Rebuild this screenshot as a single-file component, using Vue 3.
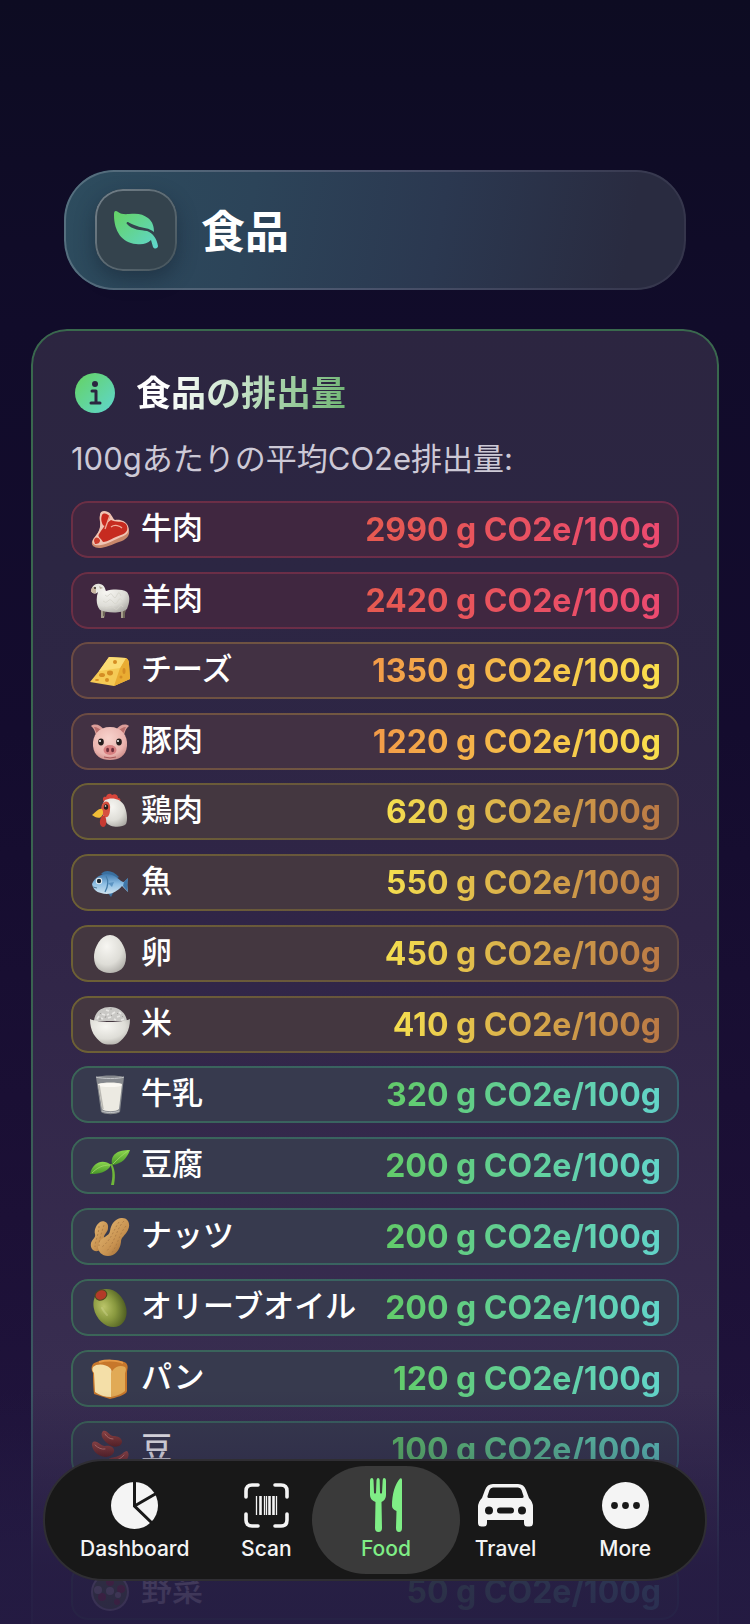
<script setup>
import { ref } from 'vue'

const groups = [
  {
    level: 'severe',
    items: [
      { icon: 'steak', name: '牛肉', grams: 2990 },
      { icon: 'sheep', name: '羊肉', grams: 2420 }
    ]
  },
  {
    level: 'high',
    items: [
      { icon: 'cheese', name: 'チーズ', grams: 1350 },
      { icon: 'pig', name: '豚肉', grams: 1220 }
    ]
  },
  {
    level: 'medium',
    items: [
      { icon: 'chicken', name: '鶏肉', grams: 620 },
      { icon: 'fish', name: '魚', grams: 550 },
      { icon: 'egg', name: '卵', grams: 450 },
      { icon: 'rice', name: '米', grams: 410 }
    ]
  },
  {
    level: 'low',
    items: [
      { icon: 'milk', name: '牛乳', grams: 320 },
      { icon: 'sprout', name: '豆腐', grams: 200 },
      { icon: 'peanut', name: 'ナッツ', grams: 200 },
      { icon: 'olive', name: 'オリーブオイル', grams: 200 },
      { icon: 'bread', name: 'パン', grams: 120 },
      { icon: 'beans', name: '豆', grams: 100 },
      { empty: true },
      { icon: 'salad', name: '野菜', grams: 50 }
    ]
  }
]

const tabs = ['Dashboard', 'Scan', 'Food', 'Travel', 'More']
const active = ref('Food')
</script>

<template>
  <div class="screen">
    <!-- food pictograms, 40x40 -->
    <svg class="sprites" aria-hidden="true">
      <defs>
        <linearGradient id="g-eco" x1="0" y1="0" x2="1" y2="1">
          <stop offset="0.1" stop-color="#64d36c" /><stop offset="1" stop-color="#5fd6cf" />
        </linearGradient>
        <radialGradient id="g-white" cx="0.4" cy="0.3" r="0.8">
          <stop offset="0" stop-color="#f7f6f2" /><stop offset="0.6" stop-color="#deddd7" /><stop offset="1" stop-color="#a9a7a2" />
        </radialGradient>
        <radialGradient id="g-pink" cx="0.45" cy="0.35" r="0.7">
          <stop offset="0" stop-color="#f8d3cd" /><stop offset="0.7" stop-color="#eab4af" /><stop offset="1" stop-color="#c98885" />
        </radialGradient>
        <linearGradient id="g-blue" x1="0" y1="0" x2="0" y2="1">
          <stop offset="0" stop-color="#3f78ad" /><stop offset="0.5" stop-color="#8ebfe4" /><stop offset="1" stop-color="#d0e3ef" />
        </linearGradient>
        <radialGradient id="g-olive" cx="0.35" cy="0.4" r="0.7">
          <stop offset="0" stop-color="#bac468" /><stop offset="0.5" stop-color="#89993f" /><stop offset="1" stop-color="#4c5b20" />
        </radialGradient>
        <linearGradient id="g-nut" x1="0" y1="0" x2="1" y2="1">
          <stop offset="0" stop-color="#e8bd78" /><stop offset="0.6" stop-color="#c89250" /><stop offset="1" stop-color="#8c5a2a" />
        </linearGradient>
        <linearGradient id="g-leaf" x1="0" y1="0" x2="0" y2="1">
          <stop offset="0" stop-color="#8bd74c" /><stop offset="1" stop-color="#47942a" />
        </linearGradient>
        <linearGradient id="g-bean" x1="0" y1="0" x2="0" y2="1">
          <stop offset="0" stop-color="#a04a43" /><stop offset="1" stop-color="#62221f" />
        </linearGradient>
      </defs>

      <symbol id="steak" viewBox="0 0 40 40">
        <path d="M10 6C10 2 14 1 18 3C22 5 22 9 25 11C30 10 36 12 38 17C41 24 38 28 32 31C25 33 18 37 11 38C5 38 1 36 2 32C3 27 9 24 10 18C11 13 9 10 10 6Z" fill="#c9876a" />
        <path d="M10 5C10 1 14 0 18 2C22 4 22 8 25 10C30 9 36 11 38 16C40 22 37 25 31 27C24 30 18 34 11 35C5 36 1 34 3 30C5 26 9 23 10 17C11 12 9 9 10 5Z" fill="#f0c4b4" />
        <path d="M12 5C14 2 18 4 20 7L17 13C17 17 13 17 12 13C11 10 11 8 12 5Z" fill="#c9291f" />
        <path d="M21 10C26 13 31 10 36 14C39 19 37 23 31 25C24 27 18 32 13 32C11 28 7 27 9 24C12 20 14 15 21 10Z" fill="#c62b20" />
        <path d="M4 31C4 27 8 26 10 30C10 33 8 34 5 34Z" fill="#cc3b2c" />
        <path d="M20 5L15 19M21 17C25 14 30 16 32 18" fill="none" stroke="#f0ad9b" stroke-width="1.3" />
      </symbol>

      <symbol id="sheep" viewBox="0 0 40 40">
        <path d="M11 27V37H14L16 28M31 27V37H34L36 27" fill="#a59c8b" />
        <path d="M14 28V35M34 28V37" stroke="#6d6558" stroke-width="2" />
        <path d="M8 11C5 14 2 12 1 10C2 5 5 2 10 3C15 4 15 8 16 10C23 8 32 8 37 11C41 16 39 23 37 28C32 33 16 32 10 29C6 24 6 17 8 11Z" fill="url(#g-white)" />
        <path d="M1 10C1 7 3 5 6 6L6 12C4 13 2 12 1 10Z" fill="#c8b5a0" />
        <circle cx="5" cy="7" r="1" fill="#332e2a" />
        <path d="M9 5L13 7L10 8Z" fill="#b8ab9c" />
        <path d="M15 14q2 3 4 0t4 1t4-1t4 1M13 20q3 3 5 0t5 1t5-1t5 1M14 26q3 2 5 0t5 1t5-1t4 0" fill="none" stroke="#d6d4cc" stroke-width="0.8" />
      </symbol>

      <symbol id="cheese" viewBox="0 0 40 40">
        <path d="M19 6L36 7C38 8 39 10 39 13L40 28L24 35L0 31L9 20Z" fill="#f5ca55" />
        <path d="M36 7C38 8 39 10 39 13L40 28L24 35L30 17Z" fill="#e9ac32" />
        <path d="M19 6L36 7L30 17L9 20Z" fill="#fbdc75" />
        <g fill="#d58d24">
          <ellipse cx="12" cy="24" rx="3" ry="2" /><ellipse cx="20" cy="22" rx="3" ry="2.4" /><circle cx="17" cy="29" r="2" />
          <ellipse cx="7" cy="29" rx="2" ry="1" /><ellipse cx="34" cy="20" rx="1.5" ry="3" /><circle cx="25" cy="11" r="2" /><circle cx="31" cy="26" r="1.5" />
        </g>
      </symbol>

      <symbol id="pig" viewBox="0 0 40 40">
        <path d="M1 4C5 1 11 3 14 8L7 16C5 11 5 7 1 4ZM39 4C35 1 29 3 26 8L33 16C35 11 35 7 39 4Z" fill="#dc9e99" />
        <path d="M4 5C7 5 10 7 12 9L8 14ZM36 5C33 5 30 7 28 9L32 14Z" fill="#b96e6c" />
        <path d="M20 5C31 5 38 13 37 24C36 34 29 38 20 38C11 38 4 34 3 24C2 13 9 5 20 5Z" fill="url(#g-pink)" />
        <ellipse cx="11" cy="20" rx="2.8" ry="3.4" fill="#241d1d" /><ellipse cx="29" cy="20" rx="2.8" ry="3.4" fill="#241d1d" />
        <circle cx="10" cy="19" r="1" fill="#fff" /><circle cx="28" cy="19" r="1" fill="#fff" />
        <ellipse cx="20" cy="28" rx="6.500" ry="5" fill="#d77f80" />
        <ellipse cx="17.600" cy="28" rx="1.500" ry="2.300" fill="#702f3b" /><ellipse cx="22.600" cy="28" rx="1.500" ry="2.300" fill="#702f3b" />
        <path d="M14 35Q20 37 26 35" fill="none" stroke="#a95658" />
      </symbol>

      <symbol id="chicken" viewBox="0 0 40 40">
        <path d="M14 10C12 7 13 4 16 5C17 1 21 1 22 3C25 1 28 3 28 6C31 6 31 9 29 11Z" fill="#d6453b" />
        <path d="M15 8C21 5 30 6 34 13C37 19 38 28 36 32C32 36 20 36 16 30C12 25 10 14 15 8Z" fill="url(#g-white)" />
        <path d="M13 11C17 7 21 11 20 17C20 23 18 26 15 25C11 23 10 15 13 11Z" fill="#d7503f" />
        <path d="M12 24C9 28 9 34 13 35C17 35 17 28 15 24Z" fill="#c73a32" />
        <path d="M2 23C6 20 9 16 12 17C14 20 13 23 11 25C8 27 5 25 2 23Z" fill="#f1bd37" />
        <ellipse cx="16" cy="15" rx="2.2" ry="2.8" fill="#281f1c" /><circle cx="15.5" cy="14" r="0.8" fill="#fff" />
      </symbol>

      <symbol id="fish" viewBox="0 0 40 40">
        <path d="M11 11C15 6 23 7 29 14L24 17ZM17 29L21 34L24 28Z" fill="#3a6f9f" />
        <path d="M2 21C6 11 18 8 26 14C30 17 32 19 34 19L38 15C37 20 37 24 38 29L32 23C27 29 19 33 11 30C6 29 3 26 2 21Z" fill="url(#g-blue)" />
        <path d="M34 19L38 15C37 20 37 24 38 29L33 23Z" fill="#3e76a8" />
        <path d="M16 13Q20 20 15 29" fill="none" stroke="#457ca8" stroke-width="1.2" />
        <circle cx="9" cy="18" r="3.2" fill="#e9eff2" /><circle cx="9" cy="18" r="2.2" fill="#182733" />
        <path d="M18 20L24 19L22 24Z" fill="#5d95c3" />
        <path d="M3 24L7 25" stroke="#4d7894" />
      </symbol>

      <symbol id="egg" viewBox="0 0 40 40">
        <path d="M20 1C29 1 36 13 36 23C36 34 29 39 20 39C11 39 4 34 4 23C4 13 11 1 20 1Z" fill="url(#g-white)" />
      </symbol>

      <symbol id="rice" viewBox="0 0 40 40">
        <path d="M4 16C5 6 12 2 20 2C29 2 36 8 37 16Z" fill="#c9c8c5" />
        <path d="M7 14L9 11M12 9L15 10M16 5L19 6M22 9L25 7M27 12L30 11M18 13L21 12M13 14L11 13M31 15L34 14M24 14L26 15M29 7L31 9M19 9L17 10" stroke="#e8e7e4" stroke-width="1.6" />
        <path d="M9 14L11 14M15 13L16 11M20 4L22 4M22 11L21 10M27 9L28 8M32 12L33 11M10 9L11 8" stroke="#a3a19e" />
        <path d="M0 14C8 18 32 18 40 14C40 26 35 33 28 38C24 40 16 40 12 38C5 33 0 26 0 14Z" fill="url(#g-white)" />
      </symbol>

      <symbol id="milk" viewBox="0 0 40 40">
        <path d="M6 2C12 0 29 0 34 2L30 37C26 40 15 40 11 37Z" fill="#85888d" />
        <path d="M8 9C13 7 28 7 32 9L29 34C26 37 15 37 12 34Z" fill="#eceae2" />
        <ellipse cx="20" cy="10" rx="12" ry="2" fill="#faf8f2" />
        <path d="M6 2C12 4 29 4 34 2M12 36C16 38 25 38 29 36" fill="none" stroke="#c5c7ca" />
        <path d="M9 10L13 34" stroke="#b9b8b2" stroke-width="1.5" />
      </symbol>

      <symbol id="sprout" viewBox="0 0 40 40">
        <path d="M22 18C26 25 25 33 24 39L21 39C23 31 23 24 20 18Z" fill="#6fb73a" />
        <path d="M22 19C20 8 28 4 40 4C37 12 32 18 22 19Z" fill="url(#g-leaf)" />
        <path d="M21 19C14 13 3 15 0 28C8 28 17 27 21 19Z" fill="url(#g-leaf)" />
        <path d="M23 18C28 13 33 8 38 5M20 19C12 19 7 22 2 27" fill="none" stroke="#a3d968" stroke-width="0.8" />
      </symbol>

      <symbol id="peanut" viewBox="0 0 40 40">
        <path d="M10 5C14 3 19 6 18 11C18 15 14 17 14 20C15 26 12 33 8 34C3 35 0 31 1 26C2 22 6 21 5 17C4 13 6 8 10 5Z" fill="url(#g-nut)" />
        <path d="M31 1C38 0 41 7 38 13C35 19 31 20 31 25C30 33 25 39 18 39C10 39 6 32 9 26C12 19 19 20 20 14C21 7 25 2 31 1Z" fill="url(#g-nut)" />
        <path d="M34 4C26 12 26 24 16 35M29 5C24 12 22 22 12 30M36 9C29 17 28 28 21 37M9 9C9 17 5 24 5 30M14 8C12 15 9 22 9 29" fill="none" stroke="#a87844" stroke-width="0.8" stroke-dasharray="2 2" />
      </symbol>

      <symbol id="olive" viewBox="0 0 40 40">
        <ellipse cx="20" cy="20" rx="15.5" ry="20" transform="rotate(-28 20 20)" fill="url(#g-olive)" />
        <ellipse cx="11" cy="7" rx="6.5" ry="5.500" transform="rotate(-25 11 7)" fill="#4f4a20" />
        <ellipse cx="11" cy="7" rx="5.500" ry="4.400" transform="rotate(-25 11 7)" fill="#b33a28" />
        <path d="M12 20Q14 24 17 27" fill="none" stroke="#d6dc9b" stroke-width="2" stroke-linecap="round" opacity="0.35" />
      </symbol>

      <symbol id="bread" viewBox="0 0 40 40">
        <path d="M3 5C9 0 30 0 36 4C39 7 37 11 37 13V32C37 36 24 39 20 40L4 35C3 25 3 17 3 14C1 11 1 8 3 5Z" fill="#c7772b" />
        <path d="M3 8C7 4 16 5 20 9C23 12 21 15 21 17V38C15 38 9 36 5 33L4 14C2 12 2 10 3 8Z" fill="#f4dfa8" />
        <path d="M23 11C26 7 31 6 35 8C37 11 35 13 35 15V32C32 35 26 37 21 38V17C21 15 21 13 23 11Z" fill="#e1aa56" />
        <path d="M9 3C16 1 27 1 33 4" fill="none" stroke="#e69a46" stroke-width="2" />
      </symbol>

      <symbol id="beans" viewBox="0 0 40 40">
        <path d="M13 1C18 0 18 5 23 6C28 6 32 8 32 12C31 18 22 18 17 13C12 9 10 4 13 1Z" fill="url(#g-bean)" />
        <path d="M3 12C8 10 10 16 15 16C21 15 25 18 24 22C21 29 10 28 5 22C2 18 1 14 3 12Z" fill="url(#g-bean)" />
        <path d="M37 21C41 25 37 31 31 35C25 39 18 36 18 31C18 27 24 28 28 26C32 25 34 21 37 21Z" fill="url(#g-bean)" />
        <path d="M15 4Q18 9 23 9M5 15Q10 20 15 19M23 31Q30 30 34 25" fill="none" stroke="#c87b72" stroke-linecap="round" />
      </symbol>

      <symbol id="salad" viewBox="0 0 40 40">
        <circle cx="20" cy="20" r="19" fill="#dcdcd8" />
        <circle cx="20" cy="20" r="17" fill="#6f9a45" />
        <g fill="#d8453f">
          <circle cx="12" cy="25" r="4" /><circle cx="31" cy="17" r="4" /><circle cx="27" cy="30" r="3" /><circle cx="20" cy="10" r="4" />
        </g>
        <g fill="#f0eed8"><circle cx="8" cy="18" r="4" /><circle cx="20" cy="19" r="4" /><circle cx="28" cy="23" r="3" /></g>
      </symbol>
    </svg>

    <main class="scroll">
      <header class="hero">
        <span class="hero-icon">
          <svg viewBox="0 0 44 38" width="44" height="38" aria-hidden="true">
            <path fill="url(#g-eco)" d="M2 0C4 0 5 4 15 3C24 2 29 3 34 7C39 11 40 16 40 21C36 17 28 17 23 15C19 14 16 12 14 11C13 11 12 12 13 13C18 19 27 19 33 20C39 22 43 28 44 35C44 37 41 39 39 36L37 29C33 33 28 34 22 33C8 32 0 20 0 4C0 2 0 0 2 0Z" />
          </svg>
        </span>
        <h1>食品</h1>
      </header>

      <section class="card">
        <div class="card-head">
          <svg viewBox="0 0 40 40" width="40" height="40" aria-hidden="true">
            <circle cx="20" cy="20" r="20" fill="url(#g-eco)" />
            <circle cx="20" cy="11" r="3" fill="#2b2540" />
            <path d="M17 18H21V30M16 30H25" fill="none" stroke="#2b2540" stroke-width="3" stroke-linecap="round" stroke-linejoin="round" />
          </svg>
          <h2>食品の排出量</h2>
        </div>
        <p class="lead">100gあたりの平均CO2e排出量:</p>
        <div class="groups">
          <ul v-for="g in groups" :key="g.level" :class="['rows', g.level]">
            <li v-for="(item, i) in g.items" :key="i" class="row">
              <template v-if="!item.empty">
                <svg class="food" aria-hidden="true"><use :href="'#' + item.icon" /></svg>
                <span class="name">{{ item.name }}</span>
                <span class="value">{{ item.grams }} g CO2e/100g</span>
              </template>
            </li>
          </ul>
        </div>
      </section>
    </main>

    <div class="fade"></div>

    <nav class="tabbar">
      <button
        v-for="tab in tabs"
        :key="tab"
        type="button"
        class="tab"
        :class="{ active: active === tab }"
        @click="active = tab"
      >
        <span class="tab-icon">
          <svg v-if="tab === 'Dashboard'" viewBox="0 0 47 47" width="47" height="47" aria-hidden="true">
            <circle cx="23.5" cy="23.5" r="23.5" fill="currentColor" />
            <path d="M23.5 -1V24L42 42M23.5 24L46 11" fill="none" stroke="#181818" stroke-width="3" />
          </svg>
          <svg v-else-if="tab === 'Scan'" viewBox="0 0 45 45" width="45" height="45" aria-hidden="true">
            <path d="M2 14V8Q2 2 8 2H14M31 2H37Q43 2 43 8V14M43 31V37Q43 43 37 43H31M14 43H8Q2 43 2 37V31" fill="none" stroke="currentColor" stroke-width="3.6" stroke-linecap="round" />
            <path d="M12.5 13V32M20.5 13V32M22.5 13V32M32.5 13V32" stroke="currentColor" stroke-width="1.3" />
            <path d="M16.5 13V32M25.5 13V32M29.5 13V32" stroke="currentColor" stroke-width="2.6" />
          </svg>
          <svg v-else-if="tab === 'Food'" viewBox="0 0 32 54" width="32" height="54" aria-hidden="true">
            <path d="M0 3Q0 0 2 0Q3 0 3.5 2L4 15Q5 16 6 15L6.5 2Q7 0 8 0Q9.500 0 9.700 2L10 15Q11 16 12 15L12.700 2Q13 0 14 0Q16 0 16 3V17Q16 22 11.500 24L12 50Q12 54 8.500 54Q5 54 5 50L5.500 24Q0 22 0 17Z" fill="currentColor" />
            <path d="M32 2V50Q32 54 29 54Q26 54 26 50L26.5 33Q22 31 22 28C22 16 25 6 30 0.5Q32 -0.5 32 2Z" fill="currentColor" />
          </svg>
          <svg v-else-if="tab === 'Travel'" viewBox="0 0 55 44" width="55" height="44" aria-hidden="true">
            <path fill="currentColor" fill-rule="evenodd" d="M15 1H40Q46 1 48 7L51 15Q55 19 55 24V40Q55 43.5 51.5 43.5H49Q46 43.5 46 40V37H9V40Q9 43.5 6 43.5H3.5Q0 43.5 0 40V24Q0 19 4 15L7 7Q9 1 15 1ZM15 4.5Q12.5 4.5 11.5 7L9.5 13Q9 15 11 15H44Q46 15 45.5 13L43.5 7Q42.5 4.5 40 4.5ZM11 23.5A4 4 0 1 0 11 31.5A4 4 0 1 0 11 23.5ZM44 23.5A4 4 0 1 0 44 31.5A4 4 0 1 0 44 23.5ZM22 24.5A3 3 0 0 0 22 30.5H33A3 3 0 0 0 33 24.5Z" />
          </svg>
          <svg v-else viewBox="0 0 47 47" width="47" height="47" aria-hidden="true">
            <circle cx="23.5" cy="23.5" r="23.5" fill="currentColor" />
            <g fill="#181818"><circle cx="12.5" cy="23.5" r="3.4" /><circle cx="23.5" cy="23.5" r="3.4" /><circle cx="34.5" cy="23.5" r="3.4" /></g>
          </svg>
        </span>
        <span class="tab-label">{{ tab }}</span>
      </button>
    </nav>
  </div>
</template>

<style>
body {
  background: #0d0c22;
}
</style>

<style scoped>
.screen {
  position: relative;
  height: 100vh;
  overflow: hidden;
  background: linear-gradient(180deg, #0d0c22 0%, #110c2a 20%, #140c2e 45%, #1c1036 75%, #221640 100%);
  color: #fff;
  font-family: Inter, "Noto Sans CJK JP", sans-serif;
}

.sprites {
  position: absolute;
  width: 0;
  height: 0;
}

.scroll {
  height: 100%;
  box-sizing: border-box;
  padding: 170px 31px 0;
  overflow-y: auto;
  scrollbar-width: none;
}

.hero {
  position: relative;
  display: flex;
  align-items: center;
  gap: 24px;
  margin: 0 33px;
  padding: 19px 31px;
  border-radius: 50px;
  background: linear-gradient(100deg, #2d4c5e 0%, #2c4459 30%, #2b3850 60%, #292b40 90%);
}

.hero::before,
.hero-icon::before,
.card::before,
.row::before {
  content: "";
  position: absolute;
  inset: 0;
  padding: 2px;
  border-radius: inherit;
  background: var(--edge);
  mask: linear-gradient(#000 0 0) content-box exclude, linear-gradient(#000 0 0);
  pointer-events: none;
}

.hero {
  --edge: linear-gradient(100deg, #56707f, #4a536c 50%, #34344a);
}

.hero-icon {
  --edge: linear-gradient(135deg, #74818a, #45545c);
  position: relative;
  display: grid;
  place-items: center;
  width: 82px;
  height: 82px;
  border-radius: 28px;
  background: #34434d;
  box-shadow: 0 8px 20px rgba(15, 25, 40, 0.4);
}

h1,
h2,
p,
ul {
  margin: 0;
  padding: 0;
}

h1 {
  padding-top: 4px;
  font-size: 44px;
  line-height: 60px;
  font-weight: 700;
}

.card {
  --edge: linear-gradient(180deg, #39694d 0%, #3a6350 50%, #3b5365 85%, #3b4560 100%);
  position: relative;
  margin-top: 39px;
  padding: 40px;
  border-radius: 36px;
  background: linear-gradient(180deg, #2c2540 0, #2c2643 240px, #302547 600px, #382d50 1050px, #33284e 100%);
}

.card-head {
  display: flex;
  align-items: center;
  gap: 21px;
  padding: 0 4px;
}

h2 {
  font-size: 35px;
  line-height: 48px;
  font-weight: 700;
  background: linear-gradient(100deg, #fff 15%, #6fb573 100%);
  background-clip: text;
  color: transparent;
}

.lead {
  margin-top: 18px;
  font-size: 31px;
  line-height: 48px;
  color: #cdc9d6;
}

.groups {
  display: flex;
  flex-direction: column;
  gap: 13px;
  margin-top: 18px;
}

.rows {
  display: flex;
  flex-direction: column;
  gap: 14px;
  list-style: none;
}

.row {
  position: relative;
  display: flex;
  align-items: center;
  gap: 11px;
  height: 57px;
  padding: 0 18px 0 19px;
  border-radius: 17px;
  background: var(--fill);
}

.food {
  width: 40px;
  height: 40px;
}

.name {
  flex: 1;
  padding-bottom: 4px;
  font-size: 31px;
  line-height: 40px;
  font-weight: 500;
}

.value {
  font-size: 32px;
  line-height: 40px;
  font-weight: 700;
  background: var(--ink);
  background-clip: text;
  color: transparent;
}

.severe {
  --fill: #402740;
  --edge: linear-gradient(90deg, #6b2f45, #6c2c4c);
  --ink: linear-gradient(100deg, #e65a50, #ec4a70);
}

.high {
  --fill: #423143;
  --edge: linear-gradient(90deg, #6b4b43, #79673f);
  --ink: linear-gradient(100deg, #f29a48, #fae04c);
}

.medium {
  --fill: #443740;
  --edge: linear-gradient(90deg, #6d6035, #614a44);
  --ink: linear-gradient(100deg, #f6e04f, #b97745);
}

.low {
  --fill: #373a4e;
  --edge: linear-gradient(90deg, #3b6557, #37606c);
  --ink: linear-gradient(100deg, #62cb68, #62d4ca);
}

.fade {
  position: absolute;
  inset: auto 0 0;
  height: 234px;
  background: linear-gradient(180deg, rgba(36, 27, 66, 0) 0%, rgba(36, 27, 66, 0.3) 28%, rgba(36, 27, 66, 0.85) 75%, rgba(36, 27, 66, 0.9) 100%);
  pointer-events: none;
}

.tabbar {
  position: absolute;
  inset: auto 43px 43px;
  display: grid;
  grid-template-columns: 6fr 5fr 5fr 5fr 5fr;
  padding: 0 20px 0 18px;
  border: 2px solid #2f2e33;
  border-radius: 61px;
  background: #181818;
}

.tab {
  position: relative;
  display: flex;
  flex-direction: column;
  align-items: center;
  padding: 14px 0 16px;
  border: none;
  background: none;
  color: #f4f4f4;
  font-family: inherit;
  cursor: pointer;
}

.tab.active {
  color: #7fee86;
}

.tab.active::before {
  content: "";
  position: absolute;
  inset: 5px -14px;
  border-radius: 54px;
  background: #3a3a3a;
}

.tab-icon {
  position: relative;
  display: grid;
  place-items: center;
  height: 60px;
}

.tab-label {
  position: relative;
  font-size: 21px;
  line-height: 28px;
  font-weight: 500;
}
</style>
